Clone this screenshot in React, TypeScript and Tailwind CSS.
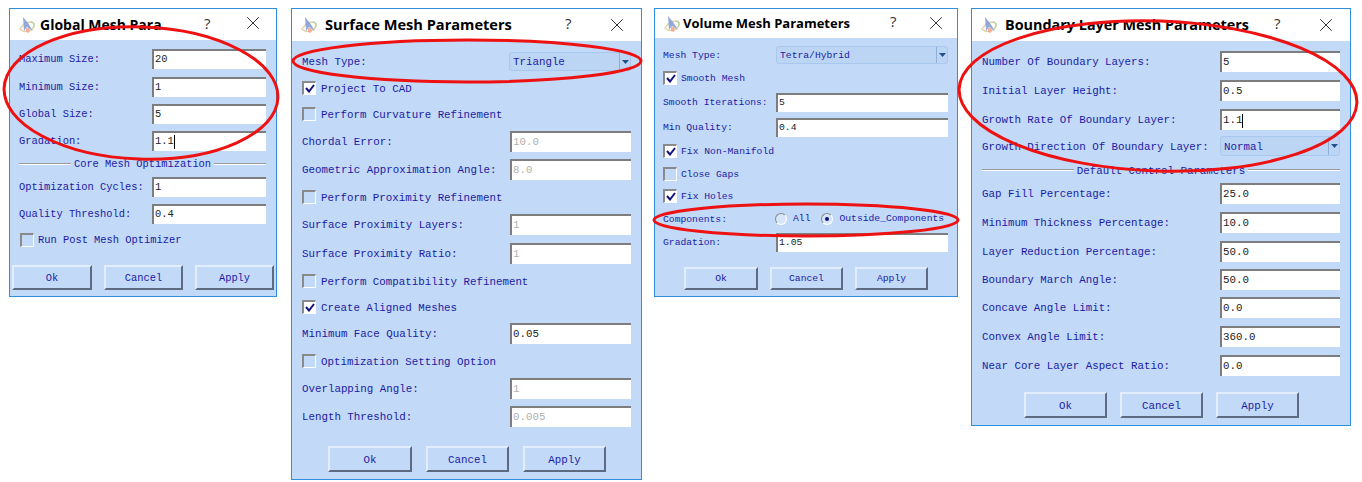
import React from "react";
import { X } from "lucide-react";

const mono = "font-['Liberation_Mono',monospace]";

function Logo() {
  return (
    <svg width="18" height="18" viewBox="0 0 18 18" className="shrink-0">
      <path d="M1 13 Q5 6 12 6 Q17 7 14 12 Q10 17 4 15 Z" fill="none" stroke="#e6d2ac" strokeWidth="1.4" />
      <path d="M12 6 Q17 7 14 12" fill="none" stroke="#b5d3a5" strokeWidth="1.4" />
      <path d="M4 1 L9 7 L14 15 L8 11 L5 15 Z" fill="#7f9cd6" opacity="0.85" />
      <path d="M7 12 L11 12 L10 17 L7 16 Z" fill="#eda78e" opacity="0.85" />
    </svg>
  );
}

function Dialog({ title, w, titleH, titleText, titleMl, text, qx, children }: { title: string; w: string; titleH: string; titleText: string; titleMl: string; text: string; qx: string; children: React.ReactNode }) {
  return (
    <div className={`${w} shrink-0 border border-[#2f8fdc] bg-[#c2d9f7] flex flex-col`}>
      <div className={`${titleH} bg-white flex items-center pl-[9px] font-['Open_Sans',sans-serif] font-bold ${titleText} text-black`}>
        <Logo />
        <span className={`${titleMl} whitespace-nowrap`}>{title}</span>
        <span className={`${qx} font-normal text-[15px] text-[#333] absolute`}>?</span>
      </div>
      <div className={`flex flex-col ${text} ${mono} text-[#1b1ba5]`}>{children}</div>
    </div>
  );
}

function Close({ className }: { className: string }) {
  return <X size={22} strokeWidth={1} className={`absolute text-[#222] ${className}`} />;
}

function Input({ value, disabled, cursor, w, h }: { value: string; disabled?: boolean; cursor?: boolean; w: string; h: string }) {
  return (
    <div className={`${w} ${h} shrink-0 flex items-center bg-white border-t-2 border-l-2 border-t-[#7d7d7d] border-l-[#7d7d7d] pl-[1px] ${disabled ? "text-[#b0b0b0]" : "text-[#222]"}`}>
      <span>{value}</span>
      {cursor && <span className="w-px h-[14px] bg-black" />}
    </div>
  );
}

function Field({ label, className = "", ...p }: { label: string; className?: string; value: string; disabled?: boolean; cursor?: boolean; w: string; h: string }) {
  return (
    <div className={`flex items-center justify-between whitespace-nowrap ${className}`}>
      <span className="pt-[2px]">{label}</span>
      <Input {...p} />
    </div>
  );
}

function Combo({ label, value, w, h, className = "" }: { label: string; value: string; w: string; h: string; className?: string }) {
  return (
    <div className={`flex items-center justify-between whitespace-nowrap ${className}`}>
      <span className="pt-[2px]">{label}</span>
      <div className={`${w} ${h} flex items-center rounded-[3px] border border-[#a9c8ee] bg-[#bdd5f5] pl-[3px]`}>
        <span className="flex-1 pt-[2px]">{value}</span>
        <span className="w-[11px] h-full border-l border-[#8fb0d8] flex items-center justify-center">
          <svg width="7" height="4" viewBox="0 0 7 4"><path d="M0 0H7L3.5 4Z" fill="#23508a" /></svg>
        </span>
      </div>
    </div>
  );
}

function Check({ label, checked, className = "" }: { label: string; checked?: boolean; className?: string }) {
  return (
    <div className={`flex items-center gap-[4px] whitespace-nowrap ${className}`}>
      <span className={`w-[14px] h-[14px] shrink-0 border-t-2 border-l-2 border-b border-r border-t-[#8a8a8a] border-l-[#8a8a8a] border-b-white border-r-white flex items-center justify-center ${checked ? "bg-white" : "bg-[#c2d9f7]"}`}>
        {checked && (
          <svg width="10" height="9" viewBox="0 0 10 9"><path d="M1 4 L4 7.5 L9 1" fill="none" stroke="#12127e" strokeWidth="2" /></svg>
        )}
      </span>
      <span className="pt-[2px]">{label}</span>
    </div>
  );
}

function Section({ label, className = "" }: { label: string; className?: string }) {
  return (
    <div className={`flex items-center gap-[3px] whitespace-nowrap ${className}`}>
      <span className="flex-1 h-[2px] border-t border-b border-t-[#9a9a9a] border-b-white" />
      <span className="pt-[2px]">{label}</span>
      <span className="flex-1 h-[2px] border-t border-b border-t-[#9a9a9a] border-b-white" />
    </div>
  );
}

function Button({ label, primary, w, h }: { label: string; primary?: boolean; w: string; h: string }) {
  return (
    <div className={`${w} ${h} flex items-center justify-center pt-[2px] border-2 border-t-[#e2eefd] border-l-[#e2eefd] border-b-[#5d6b80] border-r-[#5d6b80] ${primary ? "border-t-[#5d6b80] border-l-[#5d6b80]" : ""}`}>
      {label}
    </div>
  );
}

function Radio({ label, on }: { label: string; on?: boolean }) {
  return (
    <span className="flex items-center gap-[6px]">
      <span className="w-[12px] h-[12px] rounded-full bg-[#d6e5fa] border border-t-[#8a8a8a] border-l-[#8a8a8a] border-b-white border-r-white flex items-center justify-center">
        {on && <span className="w-[4px] h-[4px] rounded-full bg-[#12127e]" />}
      </span>
      <span>{label}</span>
    </span>
  );
}

export default function App() {
  return (
    <div className="relative w-[1362px] h-[482px] overflow-hidden bg-white flex items-start pt-[8px] pl-[9px]">
      {/* Global */}
      <div className="relative shrink-0">
        <Dialog title="Global Mesh Para" w="w-[268px]" titleH="h-[31px]" titleText="text-[14px]" titleMl="ml-[3px]" text="text-[10.4px]" qx="left-[195px] top-[4px]">
          <div className="flex flex-col pl-[9px] pr-[10px] pt-[9px]">
            <Field label="Maximum Size:" value="20" w="w-[114px]" h="h-[20px]" />
            <Field label="Minimum Size:" value="1" w="w-[114px]" h="h-[20px]" className="mt-[8px]" />
            <Field label="Global Size:" value="5" w="w-[114px]" h="h-[20px]" className="mt-[7px]" />
            <Field label="Gradation:" value="1.1" cursor w="w-[114px]" h="h-[20px]" className="mt-[7px]" />
            <Section label="Core Mesh Optimization" className="h-[20px] mt-[3px]" />
            <Field label="Optimization Cycles:" value="1" w="w-[114px]" h="h-[20px]" className="mt-[3px]" />
            <Field label="Quality Threshold:" value="0.4" w="w-[114px]" h="h-[20px]" className="mt-[7px]" />
            <Check label="Run Post Mesh Optimizer" className="h-[20px] mt-[6px] ml-[1px]" />
          </div>
          <div className="flex justify-between pl-[2px] pr-[2px] mt-[15px] mb-[6px]">
            <Button primary label="Ok" w="w-[80px]" h="h-[25px]" />
            <Button label="Cancel" w="w-[79px]" h="h-[25px]" />
            <Button label="Apply" w="w-[79px]" h="h-[25px]" />
          </div>
        </Dialog>
        <Close className="left-[233px] top-[4px]" />
      </div>

      {/* Surface */}
      <div className="relative shrink-0 ml-[14px]">
        <Dialog title="Surface Mesh Parameters" w="w-[351px]" titleH="h-[32px]" titleText="text-[14.6px]" titleMl="ml-[6px]" text="text-[10.8px]" qx="left-[274px] top-[4px]">
          <div className="flex flex-col px-[10px] pt-[11px]">
            <Combo label="Mesh Type:" value="Triangle" w="w-[122px]" h="h-[19px]" />
            <Check checked label="Project To CAD" className="h-[20px] mt-[7px] gap-[5px]" />
            <Check label="Perform Curvature Refinement" className="h-[20px] mt-[6px] gap-[5px]" />
            <Field label="Chordal Error:" value="10.0" disabled w="w-[121px]" h="h-[21px]" className="mt-[7px]" />
            <Field label="Geometric Approximation Angle:" value="8.0" disabled w="w-[121px]" h="h-[21px]" className="mt-[7px]" />
            <Check label="Perform Proximity Refinement" className="h-[20px] mt-[7px] gap-[5px]" />
            <Field label="Surface Proximity Layers:" value="1" disabled w="w-[121px]" h="h-[21px]" className="mt-[7px]" />
            <Field label="Surface Proximity Ratio:" value="1" disabled w="w-[121px]" h="h-[21px]" className="mt-[8px]" />
            <Check label="Perform Compatibility Refinement" className="h-[20px] mt-[7px] gap-[5px]" />
            <Check checked label="Create Aligned Meshes" className="h-[20px] mt-[6px] gap-[5px]" />
            <Field label="Minimum Face Quality:" value="0.05" w="w-[121px]" h="h-[21px]" className="mt-[6px]" />
            <Check label="Optimization Setting Option" className="h-[20px] mt-[7px] gap-[5px]" />
            <Field label="Overlapping Angle:" value="1" disabled w="w-[121px]" h="h-[21px]" className="mt-[7px]" />
            <Field label="Length Threshold:" value="0.005" disabled w="w-[121px]" h="h-[21px]" className="mt-[7px]" />
          </div>
          <div className="flex gap-[14px] pl-[36px] mt-[19px] mb-[7px]">
            <Button primary label="Ok" w="w-[84px]" h="h-[26px]" />
            <Button label="Cancel" w="w-[83px]" h="h-[26px]" />
            <Button label="Apply" w="w-[83px]" h="h-[26px]" />
          </div>
        </Dialog>
        <Close className="left-[315px] top-[6px]" />
      </div>

      {/* Volume */}
      <div className="relative shrink-0 ml-[12px]">
        <Dialog title="Volume Mesh Parameters" w="w-[304px]" titleH="h-[29px]" titleText="text-[13px]" titleMl="ml-[1px]" text="text-[9.7px]" qx="left-[236px] top-[2px]">
          <div className="flex flex-col pl-[8px] pr-[9px] pt-[8px]">
            <Combo label="Mesh Type:" value="Tetra/Hybrid" w="w-[172px]" h="h-[18px]" />
            <Check checked label="Smooth Mesh" className="h-[18px] mt-[5px]" />
            <Field label="Smooth Iterations:" value="5" w="w-[172px]" h="h-[19px]" className="mt-[6px]" />
            <Field label="Min Quality:" value="0.4" w="w-[172px]" h="h-[19px]" className="mt-[6px]" />
            <Check checked label="Fix Non-Manifold" className="h-[18px] mt-[5px]" />
            <Check label="Close Gaps" className="h-[18px] mt-[5px]" />
            <Check checked label="Fix Holes" className="h-[18px] mt-[4px]" />
            <div className="flex items-center h-[18px] mt-[5px] whitespace-nowrap">
              <span className="w-[112px] pt-[2px]">Components:</span>
              <Radio label="All" />
              <span className="w-[11px]" />
              <Radio on label="Outside_Components" />
            </div>
            <Field label="Gradation:" value="1.05" w="w-[172px]" h="h-[19px]" className="mt-[5px]" />
          </div>
          <div className="flex gap-[12px] pl-[29px] mt-[15px] mb-[6px]">
            <Button primary label="Ok" w="w-[74px]" h="h-[23px]" />
            <Button label="Cancel" w="w-[73px]" h="h-[23px]" />
            <Button label="Apply" w="w-[73px]" h="h-[23px]" />
          </div>
        </Dialog>
        <Close className="left-[271px] top-[4px]" />
      </div>

      {/* Boundary */}
      <div className="relative shrink-0 ml-[13px]">
        <Dialog title="Boundary Layer Mesh Parameters" w="w-[380px]" titleH="h-[32px]" titleText="text-[14.4px]" titleMl="ml-[6px]" text="text-[10.8px]" qx="left-[303px] top-[4px]">
          <div className="flex flex-col px-[10px] pt-[10px]">
            <Field label="Number Of Boundary Layers:" value="5" w="w-[120px]" h="h-[21px]" />
            <Field label="Initial Layer Height:" value="0.5" w="w-[120px]" h="h-[21px]" className="mt-[8px]" />
            <Field label="Growth Rate Of Boundary Layer:" value="1.1" cursor w="w-[120px]" h="h-[21px]" className="mt-[8px]" />
            <Combo label="Growth Direction Of Boundary Layer:" value="Normal" w="w-[120px]" h="h-[20px]" className="mt-[6px]" />
            <Section label="Default Control Parameters" className="h-[14px] mt-[7px]" />
            <Field label="Gap Fill Percentage:" value="25.0" w="w-[120px]" h="h-[21px]" className="mt-[6px]" />
            <Field label="Minimum Thickness Percentage:" value="10.0" w="w-[120px]" h="h-[21px]" className="mt-[8px]" />
            <Field label="Layer Reduction Percentage:" value="50.0" w="w-[120px]" h="h-[21px]" className="mt-[8px]" />
            <Field label="Boundary March Angle:" value="50.0" w="w-[120px]" h="h-[21px]" className="mt-[7px]" />
            <Field label="Concave Angle Limit:" value="0.0" w="w-[120px]" h="h-[21px]" className="mt-[7px]" />
            <Field label="Convex Angle Limit:" value="360.0" w="w-[120px]" h="h-[21px]" className="mt-[8px]" />
            <Field label="Near Core Layer Aspect Ratio:" value="0.0" w="w-[120px]" h="h-[21px]" className="mt-[8px]" />
          </div>
          <div className="flex gap-[13px] pl-[52px] mt-[16px] mb-[7px]">
            <Button primary label="Ok" w="w-[83px]" h="h-[26px]" />
            <Button label="Cancel" w="w-[83px]" h="h-[26px]" />
            <Button label="Apply" w="w-[83px]" h="h-[26px]" />
          </div>
        </Dialog>
        <Close className="left-[344px] top-[6px]" />
      </div>

      {/* Red annotation ellipses */}
      <svg className="absolute inset-0 pointer-events-none" width="1362" height="482" viewBox="0 0 1362 482">
        <g fill="none" stroke="#ee1111" strokeWidth="3">
          <ellipse cx="141" cy="93" rx="137" ry="66" transform="rotate(2 141 93)" />
          <ellipse cx="467" cy="61" rx="174" ry="21" />
          <ellipse cx="806" cy="220" rx="152" ry="16" />
          <ellipse cx="1158" cy="96" rx="199" ry="75" transform="rotate(2 1158 96)" />
        </g>
      </svg>
    </div>
  );
}
